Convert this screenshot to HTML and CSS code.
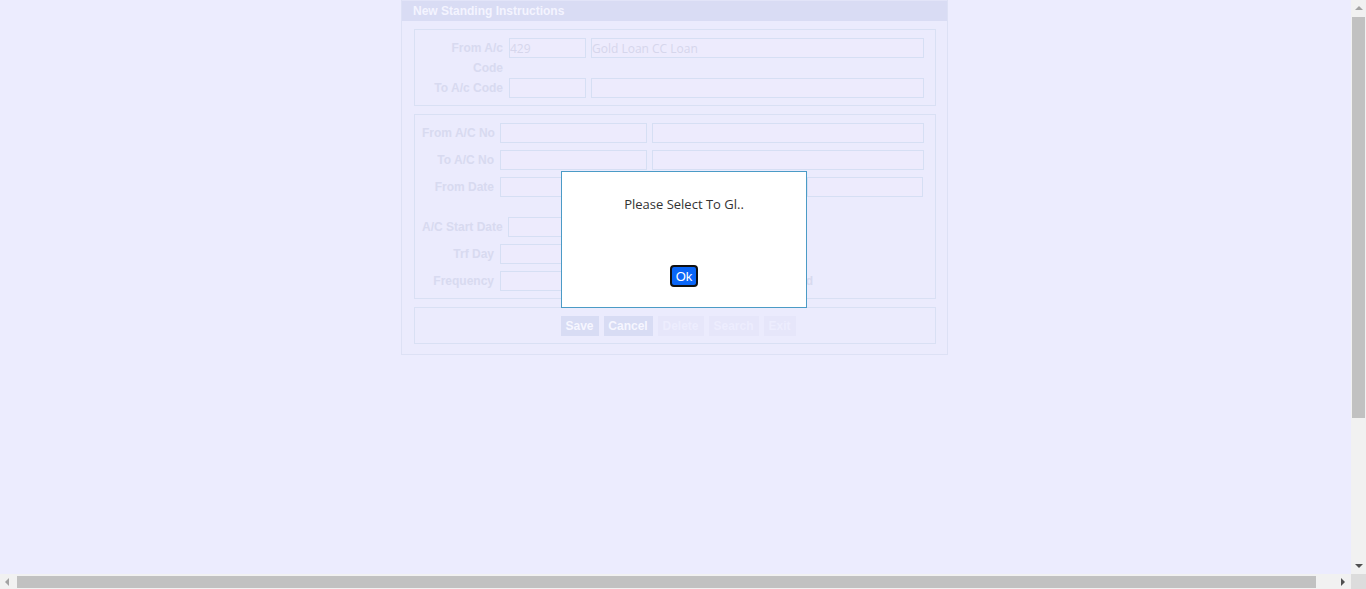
FILE: index.html
```html
<!DOCTYPE html>
<html>
<head>
<meta charset="utf-8">
<title>New Standing Instructions</title>
<link rel="stylesheet" href="styles.css">
</head>
<body>
<div class="page">
  <div class="panel">
    <div class="panel-head">New Standing Instructions</div>
    <div class="panel-body">
      <div class="fs fs-code">
        <div class="row row-tall">
          <label class="lbl lbl-code">From A/c Code</label>
          <div class="pair">
            <input class="inp w77" value="429">
            <input class="inp w333" value="Gold Loan CC Loan">
          </div>
        </div>
        <div class="row">
          <label class="lbl lbl-code">To A/c Code</label>
          <div class="pair">
            <input class="inp w77" value="">
            <input class="inp w333" value="">
          </div>
        </div>
      </div>

      <div class="fs fs-acc">
        <div class="group">
          <div class="row">
            <label class="lbl lbl-acc">From A/C No</label>
            <div class="pair">
              <input class="inp w147" value="">
              <input class="inp w272" value="">
            </div>
          </div>
          <div class="row">
            <label class="lbl lbl-acc">To A/C No</label>
            <div class="pair">
              <input class="inp w147" value="">
              <input class="inp w272" value="">
            </div>
          </div>
          <div class="row">
            <label class="lbl lbl-acc">From Date</label>
            <input class="inp w147" value="">
            <label class="lbl lbl-todate">To Date</label>
            <input class="inp w116" value="">
          </div>
        </div>
        <div class="group group-b">
          <div class="row">
            <label class="lbl lbl-auto">A/C Start Date</label>
            <input class="inp w147" value="">
          </div>
          <div class="row">
            <label class="lbl lbl-acc">Trf Day</label>
            <input class="inp w147" value="">
          </div>
          <div class="row">
            <label class="lbl lbl-acc">Frequency</label>
            <input class="inp w147" value="">
            <span class="lbl lbl-period">Period</span>
          </div>
        </div>
      </div>

      <div class="fs fs-btns">
        <button class="btn b-save">Save</button>
        <button class="btn b-cancel">Cancel</button>
        <button class="btn btn-off b-delete">Delete</button>
        <button class="btn btn-off b-search">Search</button>
        <button class="btn btn-off b-exit">Exit</button>
      </div>
    </div>
  </div>
</div>

<div class="dialog">
  <p class="dialog-msg">Please Select To Gl..</p>
  <button class="ok">Ok</button>
</div>

<div class="vscroll">
  <span class="arrow arrow-up"></span>
  <span class="vthumb"></span>
  <span class="arrow arrow-down"></span>
</div>
<div class="hscroll">
  <span class="arrow arrow-left"></span>
  <span class="hthumb"></span>
  <span class="arrow arrow-right"></span>
</div>
<div class="corner"></div>
</body>
</html>
```

FILE: styles.css
```css
html, body {
  margin: 0;
  padding: 0;
  overflow: hidden;
  background: #ececfe;
  font-family: "Liberation Sans", Arial, sans-serif;
  font-size: 12px;
}

.page {
  width: 1349px;
  height: 574px;
}

.panel {
  width: 545px;
  border: 1px solid #dde1f5;
  border-top: 0;
  background: #ebebfd;
  margin-left: 401px;
}

.panel-head {
  height: 21px;
  line-height: 20px;
  background: #d9dcf4;
  color: #f4f4ff;
  font-weight: bold;
  padding-left: 11px;
  box-sizing: border-box;
  border-top: 1px solid #e2e4f8;
}

.panel-body {
  padding: 8px 11px 10px 12px;
  display: flex;
  flex-direction: column;
  gap: 8px;
}

.fs {
  border: 1px solid #d9e0f4;
  padding: 8px 0 7px 0;
}

.fs-code {
  padding-left: 8px;
}

.fs-acc {
  padding-left: 7px;
}

.row {
  display: flex;
  align-items: flex-start;
  gap: 6px;
  height: 20px;
  margin-bottom: 7px;
}

.row:last-child {
  margin-bottom: 0;
}

.fs-code .row {
  margin-bottom: 0;
}

.row-tall {
  height: 40px;
}

.pair {
  display: flex;
  gap: 5px;
}

.group-b {
  margin-top: 20px;
}

.lbl {
  color: #d8daf0;
  font-weight: bold;
  line-height: 20px;
  text-align: right;
  flex: none;
}

.lbl-code {
  width: 80px;
}

.lbl-acc {
  width: 72px;
  white-space: nowrap;
}

.lbl-auto {
  width: 80px;
  white-space: nowrap;
}

.lbl-todate {
  width: 148px;
}

.lbl-period {
  width: 160px;
}

.inp {
  box-sizing: border-box;
  height: 20px;
  border: 1px solid #d6dff4;
  background: #edebfd;
  color: #d6d6ec;
  font-family: "Open Sans", "Liberation Sans", sans-serif;
  font-size: 12px;
  padding: 0;
  margin: 0;
  flex: none;
  outline: none;
}

.w77 { width: 77px; }
.w333 { width: 333px; }
.w147 { width: 147px; }
.w272 { width: 272px; }
.w116 { width: 116px; }

.fs-btns {
  display: flex;
  justify-content: center;
  gap: 5px;
  padding: 8px 0 7px 6px;
}

.btn {
  box-sizing: border-box;
  height: 20px;
  border: 0;
  margin: 0;
  padding: 0;
  background: #d8dcf4;
  color: #f6f6ff;
  font-family: "Liberation Sans", Arial, sans-serif;
  font-weight: bold;
  font-size: 12px;
}

.btn-off {
  background: #e6e6fa;
  color: #ededfe;
}

.b-save { width: 38px; }
.b-cancel { width: 49px; }
.b-delete { width: 46px; }
.b-search { width: 50px; }
.b-exit { width: 32px; }

.dialog {
  position: absolute;
  left: 561px;
  top: 171px;
  width: 246px;
  height: 137px;
  box-sizing: border-box;
  background: #ffffff;
  border: 1px solid #4b9bc6;
  display: flex;
  flex-direction: column;
  align-items: center;
  padding-top: 24px;
}

.dialog-msg {
  margin: 0;
  font-family: "Open Sans", "Liberation Sans", sans-serif;
  font-size: 13px;
  line-height: 17px;
  color: #333333;
}

.ok {
  margin-top: 52px;
  width: 28px;
  height: 22px;
  box-sizing: border-box;
  background: #0a66f7;
  border: 2px solid #111111;
  border-radius: 4px;
  color: #ffffff;
  font-family: "Liberation Sans", Arial, sans-serif;
  font-size: 13px;
  padding: 0;
}

.vscroll {
  position: fixed;
  left: 1351px;
  top: 0;
  width: 15px;
  height: 574px;
  background: #f1f1f1;
}

.vthumb {
  position: absolute;
  left: 1px;
  right: 1px;
  top: 17px;
  height: 401px;
  background: #c1c1c1;
}

.hscroll {
  position: fixed;
  left: 0;
  top: 574px;
  width: 1351px;
  height: 15px;
  background: #f1f1f1;
}

.hthumb {
  position: absolute;
  top: 2px;
  bottom: 1px;
  left: 17px;
  width: 1299px;
  background: #c1c1c1;
}

.corner {
  position: fixed;
  left: 1351px;
  top: 574px;
  width: 15px;
  height: 15px;
  background: #dcdcdc;
}

.arrow {
  position: absolute;
  width: 0;
  height: 0;
}

.arrow-up {
  left: 4px;
  top: 6px;
  border-left: 4px solid transparent;
  border-right: 4px solid transparent;
  border-bottom: 4px solid #a3a3a3;
}

.arrow-down {
  left: 4px;
  bottom: 6px;
  border-left: 4px solid transparent;
  border-right: 4px solid transparent;
  border-top: 4px solid #505050;
}

.arrow-left {
  left: 5px;
  top: 4px;
  border-top: 4px solid transparent;
  border-bottom: 4px solid transparent;
  border-right: 4px solid #a3a3a3;
}

.arrow-right {
  right: 6px;
  top: 4px;
  border-top: 4px solid transparent;
  border-bottom: 4px solid transparent;
  border-left: 4px solid #505050;
}
```
